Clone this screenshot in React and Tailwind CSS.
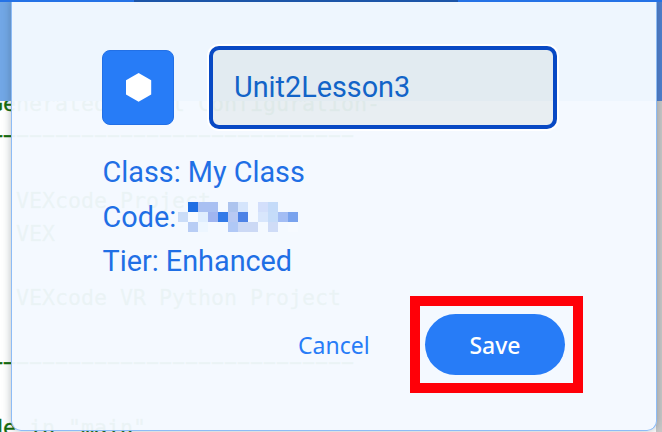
const codeLines = [
  '#region VEXcode   Generated Robot Configuration-',
  '#−−−−−−−−−−−−−−−−−−−−−−−−−−−−−−−−−−−−−−−−−−−−−',
  '',
  '                    VEXcode Project',
  '                    VEX',
  '',
  '                    VEXcode VR Python Project',
  '',
  '#−−−−−−−−−−−−−−−−−−−−−−−−−−−−−−−−−−−−−−−−−−−−−',
  '',
  '  # Add project code in "main"',
];

const maskedCode = [
  [null, '#1f6ee3', '#a9c0f2', '#a9c0f2', null, '#adc4ee', '#d5e5fc', null, '#d3dffb', '#c4dbf9', null, null],
  ['#cbddf8', '#f7fbff', '#e0eefe', '#a0b5f0', '#327ae8', '#b8c9f3', '#4d82e6', null, '#d8e6fc', '#c5dcf9', '#a3bdf4', '#79a3ee'],
  [null, '#b8cdf5', '#edf6ff', null, null, '#b0c8f6', '#ccd9f5', '#ccd9f5', null, '#cfdcf7', null, '#f6faff'],
];

function Editor() {
  return (
    <div className="flex h-full flex-col">
      <div className="h-[2px] shrink-0" />
      <div className="flex h-[99px] shrink-0 justify-between bg-[#72a7e6]">
        <div />
        <div className="w-[6px] bg-[#4f7fcf]" />
      </div>
      <div className="flex min-h-0 flex-1 justify-between overflow-hidden bg-white">
        <div className="-mt-[13px] -ml-[244px] w-[700px] shrink-0 font-['DejaVu_Sans_Mono',monospace] text-[21.6px] leading-[32.4px] text-[#146b0c] [-webkit-text-stroke:0.4px_#146b0c]">
          {codeLines.map((line, i) => (
            <div key={i} className="h-[32.4px] whitespace-pre">
              {line}
            </div>
          ))}
        </div>
        <div className="ml-[200px] w-[6px] shrink-0 bg-[#c8c8c8]" />
      </div>
    </div>
  );
}

function MaskedCode() {
  return (
    <div className="grid grid-cols-12">
      {maskedCode.flat().map((c, i) => (
        <div key={i} className="h-[10px] w-[10px]" style={{ backgroundColor: c ?? 'transparent' }} />
      ))}
    </div>
  );
}

function Dialog() {
  return (
    <div className="absolute top-0 left-[11px] flex h-[431px] w-[646px] flex-col rounded-b-[10px] border border-t-0 border-[#8dbcf6] bg-[#f4f9ff]/96 shadow-[0_0_8px_rgba(40,60,70,0.35)]">
      <div className="flex pt-[46px] pl-[90px]">
        <div className="mt-1 flex h-[75px] w-[72px] items-center justify-center rounded-lg border border-[#2270e6] bg-[#277cf7]">
          <svg width="28" height="31" viewBox="0 0 28 31">
            <polygon points="14.6,1 27.2,8.2 27.2,22.6 14.6,29.8 2,22.6 2,8.2" fill="white" />
          </svg>
        </div>
        <div className="ml-[35px] flex h-[83px] w-[348px] items-center rounded-[10px] border-4 border-[#0849c4] bg-[#002800]/5 pl-[21px] font-['Roboto',sans-serif] text-[28.8px] text-[#1264c8] ring-2 ring-white">
          Unit2Lesson3
        </div>
      </div>
      <div className="mt-[21px] ml-[90.5px] font-['Roboto',sans-serif] text-[28.8px] leading-[44.5px] text-[#1f6fe5]">
        <div>Class: My Class</div>
        <div className="flex items-center">
          <span className="w-[75.5px]">Code:</span>
          <MaskedCode />
        </div>
        <div>Tier: Enhanced</div>
      </div>
      <div className="mt-[12px] flex items-center pl-[286px] font-['Noto_Sans',sans-serif] text-[23px]">
        <div className="w-[112px] pt-[2px] text-[#277cf7]">Cancel</div>
        <div className="flex h-[97px] w-[173px] items-start border-10 border-[#ff0008] pt-2 pl-[5px]">
          <div className="flex h-[61px] w-[140px] items-center justify-center rounded-full bg-[#277cf7] pt-[2px] font-medium text-white">
            Save
          </div>
        </div>
      </div>
    </div>
  );
}

export default function App() {
  return (
    <div className="relative h-[432px] w-[662px] overflow-hidden bg-white">
      <Editor />
      <Dialog />
      <div className="absolute top-0 left-0 flex h-[2px] w-full bg-[#2472e6]">
        <div className="ml-[134px] w-[324px] bg-[#1c55a8]" />
      </div>
    </div>
  );
}
